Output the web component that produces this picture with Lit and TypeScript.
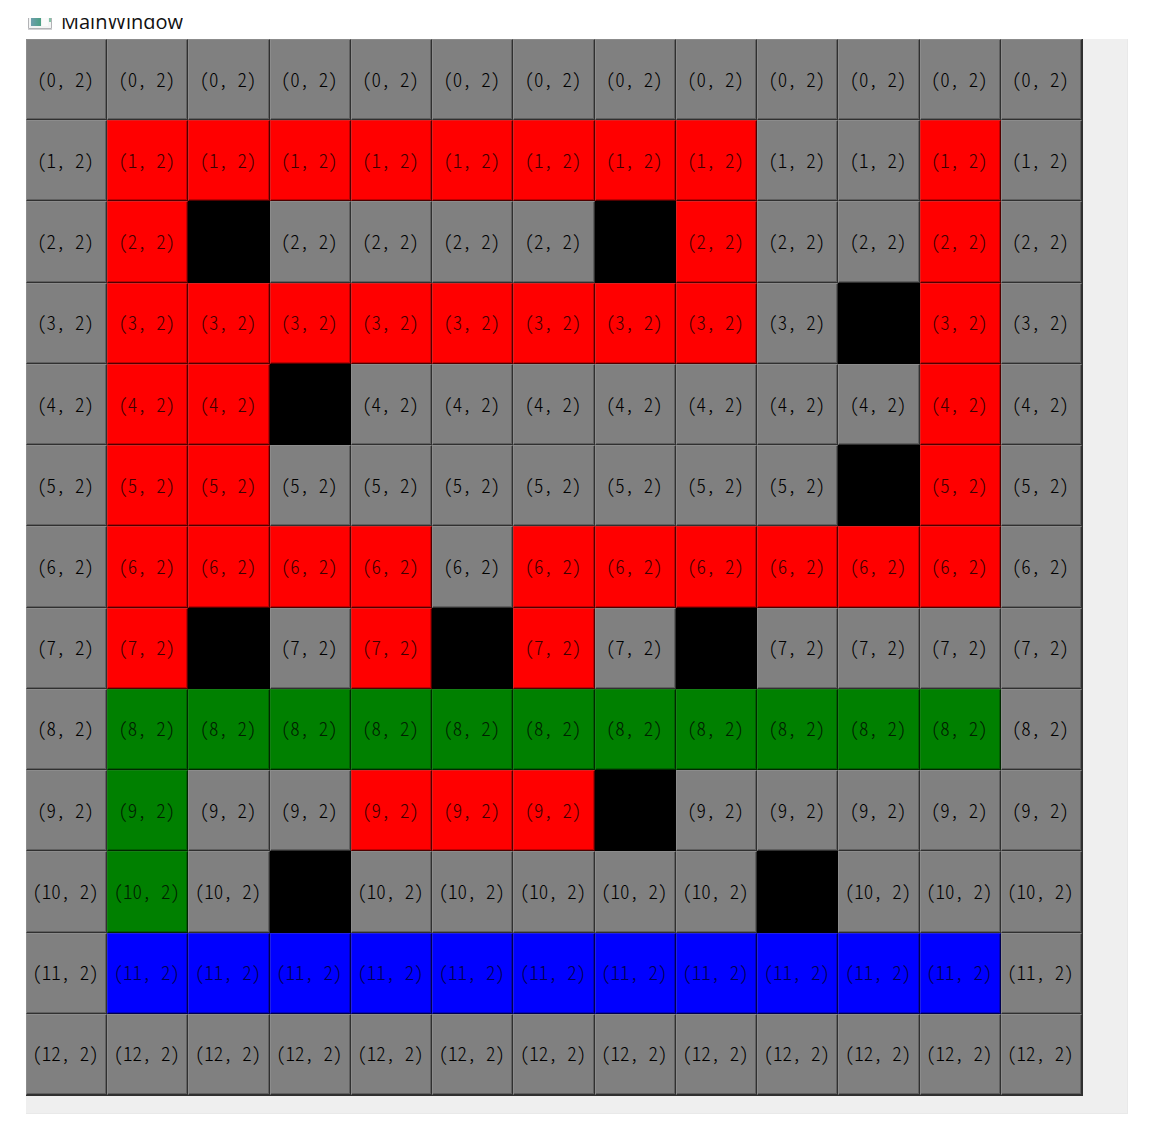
import { LitElement, html, css } from "lit";
import { customElement } from "lit/decorators.js";
import { classMap } from "lit/directives/class-map.js";

// One character per cell: . idle, r red, g green, b blue, # blocked
const BOARD = [
  ".............",
  ".rrrrrrrr..r.",
  ".r#....#r..r.",
  ".rrrrrrrr.#r.",
  ".rr#.......r.",
  ".rr.......#r.",
  ".rrrr.rrrrrr.",
  ".r#.r#r.#....",
  ".ggggggggggg.",
  ".g..rrr#.....",
  ".g.#.....#...",
  ".bbbbbbbbbbb.",
  ".............",
];

@customElement("app-root")
export class AppRoot extends LitElement {
  static styles = css`
    :host {
      display: block;
      background: #fff;
      padding: 18px 48px 21px 26px;
    }
    .titlebar {
      display: flex;
      align-items: flex-end;
      gap: 8px;
      height: 12px;
      padding-left: 2px;
      padding-bottom: 9px;
      overflow: hidden;
    }
    .icon {
      flex: none;
      display: block;
      width: 25px;
      height: 12px;
    }
    .title {
      margin: 0;
      height: 12px;
      display: flex;
      align-items: flex-end;
      font: 400 20px/22px "Open Sans", "Noto Sans", sans-serif;
      color: #111;
      overflow: hidden;
    }
    .title span {
      display: block;
      margin-bottom: -3px;
    }
    .client {
      background: #efefef;
      padding: 0 45px 18px 0;
      box-shadow: inset -1px -1px #e9e9e9;
    }
    .board {
      display: grid;
      grid-template-columns: repeat(13, minmax(0, 1fr));
      border-bottom: 1px solid #303030;
      border-right: 1px solid #303030;
    }
    .cell {
      aspect-ratio: 1;
      min-width: 0;
      margin: 0;
      padding: 0 2px 2px 0;
      border: 1px solid;
      border-color: #8c8c8c #303030 #303030 #8c8c8c;
      border-radius: 0;
      background: #808080;
      color: #000;
      font: 300 19px/24px "Noto Sans CJK SC", sans-serif;
      font-feature-settings: "hwid";
      white-space: nowrap;
      box-shadow: inset -1px -1px #606060;
    }
    .red {
      background: #f00;
      color: #400000;
      border-color: #e02020 #500000 #500000 #e02020;
      box-shadow: inset -1px -1px #c00000;
    }
    .green {
      background: #008000;
      color: #002000;
      border-color: #148014 #002800 #002800 #148014;
      box-shadow: inset -1px -1px #006000;
    }
    .blue {
      background: #00f;
      color: #000050;
      border-color: #2020e8 #000050 #000050 #2020e8;
      box-shadow: inset -1px -1px #0000c0;
    }
    .blocked {
      background: #000;
      border-color: #000;
      box-shadow: none;
    }
  `;

  private renderCell(kind: string, row: number) {
    const blocked = kind === "#";
    const classes = {
      cell: true,
      red: kind === "r",
      green: kind === "g",
      blue: kind === "b",
      blocked,
    };
    return blocked
      ? html`<button type="button" class=${classMap(classes)} aria-label="Blocked"></button>`
      : html`<button type="button" class=${classMap(classes)}>(${row}, 2)</button>`;
  }

  render() {
    return html`
      <header class="titlebar">
        <svg class="icon" viewBox="0 0 25 12" aria-hidden="true">
          <defs>
            <linearGradient id="pane" x1="0" y1="0" x2="1" y2="0">
              <stop offset="0" stop-color="#6f9fae" />
              <stop offset="1" stop-color="#4aa083" />
            </linearGradient>
          </defs>
          <path d="M0.5 0V10.5H23.5V0" fill="#f3f4f4" stroke="#b2b3b6" />
          <rect x="3" y="0" width="10" height="8" fill="url(#pane)" />
          <rect x="14" y="0" width="6" height="8" fill="#fafbfb" />
          <rect x="21" y="0" width="2" height="4" fill="#86c3a8" />
          <path d="M0 11.5H24" stroke="#d2d2d4" />
        </svg>
        <h1 class="title"><span>MainWindow</span></h1>
      </header>
      <main class="client">
        <div class="board">
          ${BOARD.map((line, row) => [...line].map((kind) => this.renderCell(kind, row)))}
        </div>
      </main>
    `;
  }
}
